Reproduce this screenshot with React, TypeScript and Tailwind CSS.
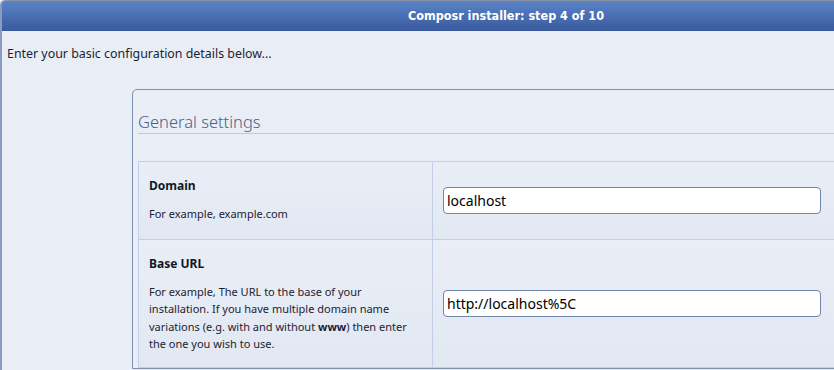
import React from "react";

const ui = { fontFamily: "'Noto Sans', 'Open Sans', sans-serif" };
const narrow = { fontFamily: "'Liberation Sans Narrow', 'DejaVu Sans Condensed', 'Liberation Sans', sans-serif" };

const Row = ({
  label,
  children,
  value,
  h,
}: {
  label: string;
  children: React.ReactNode;
  value: string;
  h: string;
}) => {
  return (
    <div className={`grid grid-cols-[294px_1fr] border-b border-[#c3cfe6] ${h}`}>
      <div className="border-r border-[#c3cfe6] bg-gradient-to-b from-[#e9eef6] to-[#e2e8f2] px-[10px] pt-[15px]">
        <div className="text-[12px] font-bold text-[#111827]">{label}</div>
        <div className="mt-[10px] text-[11px] leading-[17.5px] text-[#1c2233]">{children}</div>
      </div>
      <div className="flex items-center bg-gradient-to-b from-[#e9eef6] to-[#e2e8f2] pl-[10px]">
        <input
          readOnly
          value={value}
          className="h-[27px] w-[378px] rounded-[4px] border border-[#7186ab] bg-white px-[3px] text-[14px] text-black outline-none"
          style={ui}
        />
      </div>
    </div>
  );
};

export default function App() {
  return (
    <div className="h-[370px] w-[834px] overflow-hidden bg-[#e9eef6]" style={ui}>
      <div className="w-[1010px] h-full border-l-2 border-[#8a9bbd] rounded-tl-[5px]">
        <div className="flex h-[31px] items-center justify-center border-t border-[#8a93a6] bg-gradient-to-b from-[#5a84c7] to-[#3a5a9d] rounded-tl-[4px]">
          <span className="text-[12.5px] font-bold text-white" style={narrow}>
            Composr installer: step 4 of 10
          </span>
        </div>
        <div className="px-[5px] pt-[14px] text-[12.4px] text-[#1a1f36]">
          Enter your basic configuration details below...
        </div>
        <div className="ml-[130px] mt-[25px] w-[746px] rounded-tl-[5px] border border-[#7d8fae] px-[5px]">
          <div className="mt-[21px] border-b border-[#bcc9e2] text-[16.5px] leading-[22px] font-light text-[#4b6088]">
            General settings
          </div>
          <div className="mt-[27px] border-l border-t border-r border-[#c3cfe6]">
            <Row label="Domain" value="localhost" h="h-[78px]">
              For example, example.com
            </Row>
            <Row label="Base URL" value="http://localhost%5C" h="h-[128px]">
              For example, The URL to the base of your installation. If you have multiple domain name
              variations (e.g. with and without <b>www</b>) then enter the one you wish to use.
            </Row>
          </div>
        </div>
      </div>
    </div>
  );
}
